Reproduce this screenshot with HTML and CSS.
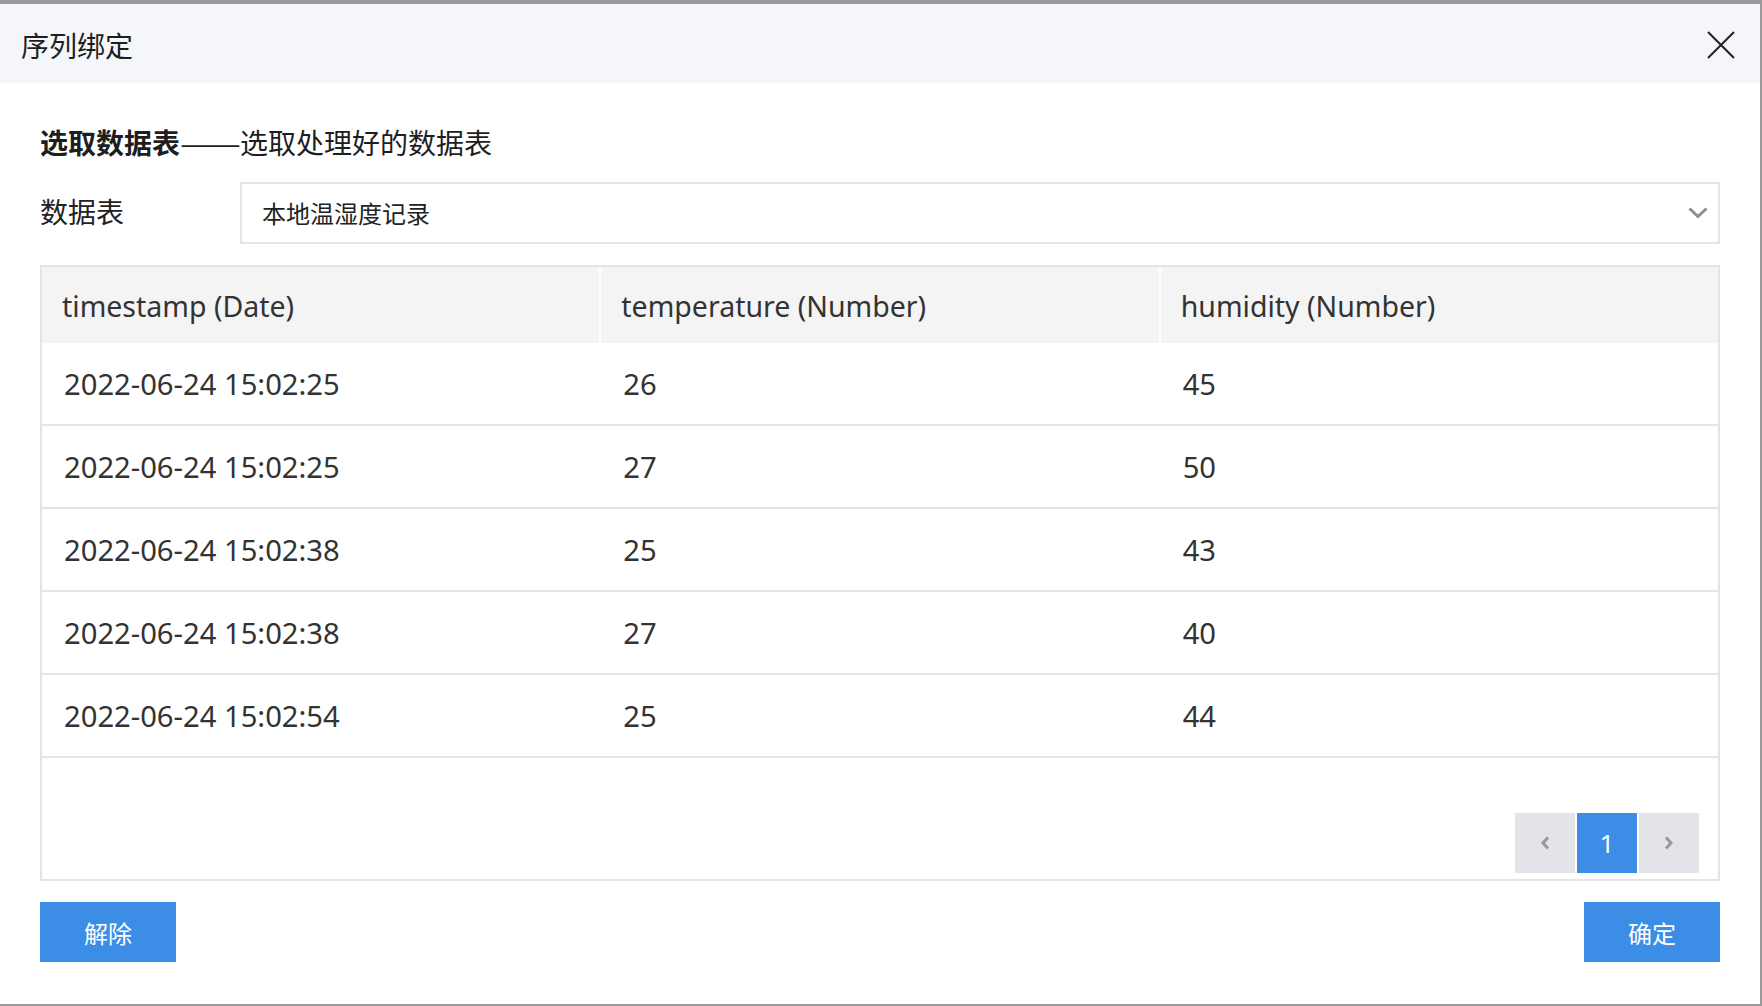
FILE: index.html
```html
<!DOCTYPE html>
<html lang="zh-CN">
<head>
<meta charset="utf-8">
<title>序列绑定</title>
<link rel="stylesheet" href="styles.css">
</head>
<body>
<div class="dialog">
  <div class="dialog-header">
    <span class="dialog-title">序列绑定</span>
    <button class="close-btn" aria-label="关闭">
      <svg width="28" height="28" viewBox="0 0 28 28"><path d="M1 1 L27 27 M27 1 L1 27" stroke="#222" stroke-width="2" fill="none"/></svg>
    </button>
  </div>
  <div class="dialog-body">
    <div class="section-title"><b>选取数据表</b><span class="dash">——</span>选取处理好的数据表</div>
    <div class="field">
      <label class="field-label">数据表</label>
      <div class="select">
        <span class="select-value">本地温湿度记录</span>
        <svg class="select-arrow" width="20" height="12" viewBox="0 0 20 12"><path d="M1.5 1.5 L10 9.5 L18.5 1.5" stroke="#8e8e8e" stroke-width="3" fill="none"/></svg>
      </div>
    </div>
    <div class="data-table">
      <div class="tr th">
        <div class="td">timestamp (Date)</div>
        <div class="td">temperature (Number)</div>
        <div class="td">humidity (Number)</div>
      </div>
      <div class="tr"><div class="td">2022-06-24 15:02:25</div><div class="td">26</div><div class="td">45</div></div>
      <div class="tr"><div class="td">2022-06-24 15:02:25</div><div class="td">27</div><div class="td">50</div></div>
      <div class="tr"><div class="td">2022-06-24 15:02:38</div><div class="td">25</div><div class="td">43</div></div>
      <div class="tr"><div class="td">2022-06-24 15:02:38</div><div class="td">27</div><div class="td">40</div></div>
      <div class="tr"><div class="td">2022-06-24 15:02:54</div><div class="td">25</div><div class="td">44</div></div>
      <div class="pager">
        <span class="page-btn">
          <svg width="12" height="16" viewBox="0 0 12 16"><path d="M9 2.5 L4 8 L9 13.5" stroke="#989898" stroke-width="3" fill="none"/></svg>
        </span>
        <span class="page-btn active">1</span>
        <span class="page-btn">
          <svg width="12" height="16" viewBox="0 0 12 16"><path d="M3 2.5 L8 8 L3 13.5" stroke="#989898" stroke-width="3" fill="none"/></svg>
        </span>
      </div>
    </div>
    <div class="dialog-footer">
      <button class="btn">解除</button>
      <button class="btn">确定</button>
    </div>
  </div>
</div>
</body>
</html>
```
FILE: styles.css
```css
* { box-sizing: border-box; }
html, body { margin: 0; padding: 0; background: #fff; }
body {
  font-family: "Noto Sans", "Noto Sans CJK SC", sans-serif;
  color: #333;
}
.dialog {
  width: 1762px;
  height: 1006px;
  border-top: 4px solid #98999d;
  border-right: 2px solid #9a9a9a;
  border-bottom: 2px solid #9a9a9a;
  background: #fff;
  display: flex;
  flex-direction: column;
}
.dialog-header {
  height: 79px;
  background: #f5f6fa;
  display: flex;
  align-items: center;
  justify-content: space-between;
  padding: 2px 25px 0 21px;
}
.dialog-title {
  font-family: "Noto Sans CJK SC", sans-serif;
  font-size: 28px;
  line-height: 40px;
  color: #1e1e1e;
}
.close-btn {
  border: 0;
  background: transparent;
  padding: 0;
  width: 28px;
  height: 28px;
  display: flex;
}
.dialog-body {
  padding: 39px 40px 0 40px;
}
.section-title {
  font-family: "Noto Sans CJK SC", sans-serif;
  font-size: 28px;
  line-height: 40px;
  color: #1e1e1e;
  white-space: nowrap;
}
.section-title b { font-weight: 700; }
.section-title .dash {
  display: inline-block;
  width: 60px;
  transform: scaleX(1.3);
  transform-origin: left center;
}
.field {
  margin-top: 20px;
  display: flex;
  align-items: center;
}
.field-label {
  width: 200px;
  font-family: "Noto Sans CJK SC", sans-serif;
  font-size: 28px;
  line-height: 58px;
  padding-bottom: 4px;
  color: #222;
}
.select {
  flex: 1;
  height: 62px;
  border: 2px solid #e3e4e9;
  display: flex;
  align-items: center;
  justify-content: space-between;
  padding: 0 10px 0 20px;
}
.select-value {
  font-family: "Noto Sans CJK SC", sans-serif;
  font-size: 24px;
  color: #222;
  line-height: 30px;
}
.data-table {
  margin-top: 21px;
  border: 2px solid #e3e4e9;
}
.tr {
  display: grid;
  grid-template-columns: 1fr 1fr 1fr;
  column-gap: 2px;
  height: 83px;
  border-bottom: 2px solid #e3e4e9;
  align-items: center;
}
.tr.th {
  height: 76px;
  border-bottom: 0;
  background: #fff;
}
.tr.th .td {
  background: #f4f4f4;
  height: 100%;
  display: flex;
  align-items: center;
  font-size: 28.5px;
  padding-left: 20px;
  padding-top: 2px;
}
.td {
  padding-left: 22px;
  font-size: 29.2px;
  line-height: 40px;
  color: #333;
  white-space: nowrap;
}
.pager {
  display: flex;
  justify-content: flex-end;
  gap: 2px;
  padding: 55px 19px 6px 0;
}
.page-btn {
  width: 60px;
  height: 60px;
  background: #e3e4e9;
  display: flex;
  align-items: center;
  justify-content: center;
  font-size: 26px;
  color: #fff;
}
.page-btn.active { background: #3b8de5; }
.dialog-footer {
  margin-top: 21px;
  display: flex;
  justify-content: space-between;
}
.btn {
  width: 136px;
  height: 60px;
  border: 0;
  background: #3b8de5;
  color: #fff;
  font-family: "Noto Sans CJK SC", sans-serif;
  font-size: 24px;
  padding: 0;
}
```
